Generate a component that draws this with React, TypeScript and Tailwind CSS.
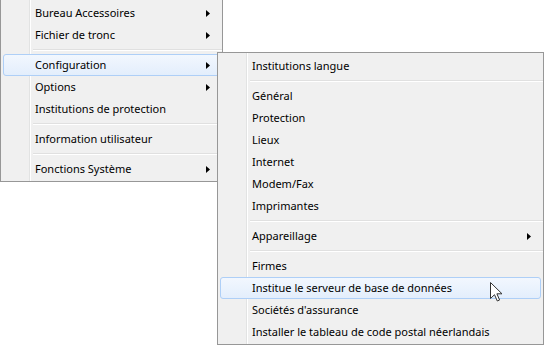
import React from "react";

type Entry = { label?: string; sub?: boolean; sep?: boolean; active?: boolean };

const mainItems: Entry[] = [
  { label: "Bureau Accessoires", sub: true },
  { label: "Fichier de tronc", sub: true },
  { sep: true },
  { label: "Configuration", sub: true, active: true },
  { label: "Options", sub: true },
  { label: "Institutions de protection" },
  { sep: true },
  { label: "Information utilisateur" },
  { sep: true },
  { label: "Fonctions Système", sub: true },
];

const configItems: Entry[] = [
  { label: "Institutions langue" },
  { sep: true },
  { label: "Général" },
  { label: "Protection" },
  { label: "Lieux" },
  { label: "Internet" },
  { label: "Modem/Fax" },
  { label: "Imprimantes" },
  { sep: true },
  { label: "Appareillage", sub: true },
  { sep: true },
  { label: "Firmes" },
  { label: "Institue le serveur de base de données", active: true },
  { label: "Sociétés d'assurance" },
  { label: "Installer le tableau de code postal néerlandais" },
];

const Arrow = () => (
  <svg width="4" height="7" viewBox="0 0 4 7" className="block">
    <path d="M0 0 L4 3.5 L0 7 Z" fill="#000" />
  </svg>
);

const MenuRow = ({ item }: { item: Entry }) => {
  if (item.sep) {
    return (
      <div className="h-[8px] flex flex-col justify-center pl-[32px]">
        <div className="h-px bg-[#e0e0e0]" />
        <div className="h-px bg-white" />
      </div>
    );
  }
  return (
    <div
      className={`h-[22px] mx-[2px] flex items-center rounded-[3px] border ${
        item.active
          ? "border-[#aecff7] bg-gradient-to-b from-[#f2f7fe] to-[#e3eefc]"
          : "border-transparent"
      }`}
    >
      <span className="pl-[31px] flex-1 whitespace-nowrap">{item.label}</span>
      {item.sub && (
        <span className="pr-[9px]">
          <Arrow />
        </span>
      )}
    </div>
  );
};

// menu body, positioned by the caller
const MenuBody = ({ items }: { items: Entry[] }) => (
  <>
    <div className="absolute top-0 bottom-0 left-[28px] w-[2px] flex">
      <div className="w-px bg-[#e2e3e3]" />
      <div className="w-px bg-white" />
    </div>
    <div className="relative">
      {items.map((it, i) => (
        <MenuRow key={i} item={it} />
      ))}
    </div>
  </>
);

const Cursor = () => (
  <svg width="13" height="20" viewBox="0 0 13 20" className="absolute left-[490px] top-[282px]">
    <path
      d="M0.5 0.5 L0.5 16.5 L4.5 12.7 L7.3 19 L9.6 18 L6.9 11.8 L12 11.8 Z"
      fill="#fff"
      stroke="#333"
      strokeWidth="1"
      strokeLinejoin="miter"
    />
  </svg>
);

export default function App() {
  return (
    <div
      className="relative w-[545px] h-[346px] bg-white overflow-hidden text-[11px] text-black"
      style={{ fontFamily: '"Noto Sans", "Open Sans", sans-serif' }}
    >
      <div className="relative w-[223px] bg-[#f0f0f0] border-[#979797] border-l border-r border-b pt-[2px] pb-[1px]">
        <MenuBody items={mainItems} />
      </div>
      <div className="absolute left-[217px] top-[52px] w-[327px] bg-[#f0f0f0] border border-[#979797] pt-[2px] pb-[1px]">
        <MenuBody items={configItems} />
      </div>
      <Cursor />
    </div>
  );
}
